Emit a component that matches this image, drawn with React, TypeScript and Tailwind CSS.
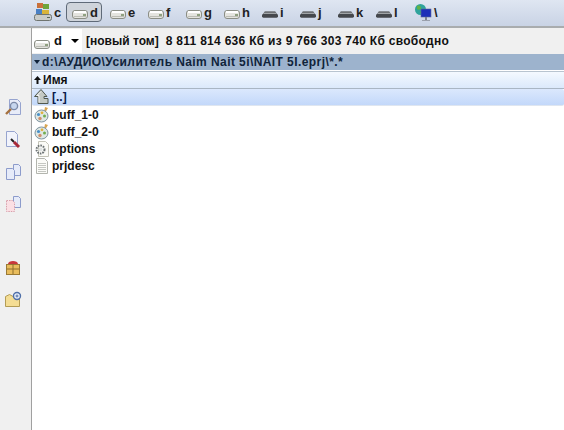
const font = "font-['Liberation_Sans',Arial,sans-serif]";

function DriveIcon({ dark = false }: { dark?: boolean }) {
  if (dark) {
    return (
      <svg width="16" height="10" viewBox="0 0 17 10" className="shrink-0">
        <path d="M3 2h11l2 3v1H1V5z" fill="#6e7175" />
        <rect x="0" y="5" width="17" height="4" rx="1.5" fill="#45484d" />
        <rect x="2" y="4" width="13" height="1" fill="#a5a8ac" />
      </svg>
    );
  }
  return (
    <svg width="16" height="10" viewBox="0 0 16 10" className="shrink-0">
      <rect x="0.5" y="1.5" width="15" height="8" rx="2.5" fill="#e4e4df" stroke="#8b8e85" />
      <rect x="2" y="2" width="12" height="2" fill="#ffffff" />
      <rect x="2" y="7" width="12" height="1" fill="#bcbdb5" />
      <rect x="11" y="5" width="3" height="2" fill="#8fa080" />
    </svg>
  );
}

function WindowsDrive() {
  return (
    <svg width="18" height="18" viewBox="0 0 18 18" className="shrink-0">
      <rect x="3" y="0" width="6" height="5" fill="#c9703a" />
      <rect x="9" y="1" width="6" height="5" fill="#6da53c" />
      <rect x="2" y="6" width="6" height="5" fill="#4a80c4" />
      <rect x="8" y="7" width="7" height="5" fill="#d9b43a" />
      <rect x="0.5" y="11.5" width="17" height="6" rx="2" fill="#c9cbc8" stroke="#6f7470" />
      <rect x="13" y="14" width="3" height="1" fill="#57655a" />
    </svg>
  );
}

function NetworkIcon() {
  return (
    <svg width="18" height="19" viewBox="0 0 18 19" className="shrink-0">
      <circle cx="6.5" cy="6.5" r="5.5" fill="#2fa39c" />
      <path d="M3 3c2-1 4 0 4 2S4 7 3 6zM6 9l3-1 1 2-2 2z" fill="#62b347" />
      <rect x="7" y="6" width="10" height="8" fill="#1c2fb8" stroke="#5a6a9a" strokeWidth="0.6" />
      <rect x="11" y="14" width="2" height="3" fill="#7c8190" />
      <rect x="8" y="17" width="8" height="1" fill="#9aa0ac" />
    </svg>
  );
}

function UpIcon() {
  return (
    <svg width="16" height="16" viewBox="0 0 16 16" className="shrink-0">
      <path d="M7 0.5L0.5 7.5H4v7h10v-5H10V7.5h3z" fill="#c4c9c4" stroke="#50584f" />
      <path d="M7 2.5L3 6.5h2v7" fill="none" stroke="#f4f4f4" />
    </svg>
  );
}

function ProjectIcon() {
  return (
    <svg width="16" height="16" viewBox="0 0 16 16" className="shrink-0">
      <path d="M11 0l3 1-3 5-1-1z" fill="#d9a552" />
      <ellipse cx="7.5" cy="9" rx="6.5" ry="6" fill="#dfe8e4" stroke="#7f94a0" />
      <circle cx="4.5" cy="7.5" r="1.6" fill="#4a90c8" />
      <circle cx="8" cy="5.8" r="1.4" fill="#e0b13c" />
      <circle cx="10.5" cy="9" r="1.5" fill="#72ad4e" />
      <circle cx="6" cy="11.5" r="1.7" fill="#cf8f6a" />
    </svg>
  );
}

function OptionsIcon() {
  return (
    <svg width="16" height="16" viewBox="0 0 16 16" className="shrink-0">
      <path d="M4.5 0.5h7l3 3v12h-10z" fill="#fbfbf7" stroke="#c4c4b8" />
      <circle cx="6.5" cy="8.5" r="4" fill="none" stroke="#6c7274" strokeWidth="2" strokeDasharray="1.6 1" />
      <circle cx="6.5" cy="8.5" r="2" fill="#e0e3e3" />
    </svg>
  );
}

function TextFileIcon() {
  return (
    <svg width="16" height="16" viewBox="0 0 16 16" className="shrink-0">
      <path d="M2.5 0.5h8l3 3v12h-11z" fill="#fbfbf8" stroke="#b3b5ae" />
      <path d="M4 5.5h8M4 7.5h8M4 9.5h8M4 11.5h8M4 13.5h8" stroke="#c5c7c2" />
    </svg>
  );
}

function SearchDocIcon() {
  return (
    <svg width="18" height="20" viewBox="0 0 18 20">
      <path d="M5.5 1.5h8l3 3v12h-11z" fill="#e8ecf8" stroke="#97a4cf" />
      <circle cx="10" cy="8" r="3.6" fill="#c7d6ee" stroke="#7c8aa8" strokeWidth="1.4" />
      <path d="M7 11l-5 5" stroke="#a5713f" strokeWidth="2.4" />
    </svg>
  );
}

function EraseDocIcon() {
  return (
    <svg width="18" height="20" viewBox="0 0 18 20">
      <path d="M2.5 1.5h8l3 3v12h-11z" fill="#f1f3fb" stroke="#97a4cf" />
      <path d="M7 9l3 3" stroke="#202020" strokeWidth="2" />
      <path d="M10 12l5 5" stroke="#a82a3a" strokeWidth="3" />
    </svg>
  );
}

function CopyIcon({ pink = false }: { pink?: boolean }) {
  return (
    <svg width="18" height="18" viewBox="0 0 18 18">
      <path d="M9.5 1.5h5l2 2v9h-7z" fill="#e6ebf9" stroke="#8c9bcb" />
      <path
        d="M2.5 5.5h6l2 2v9h-8z"
        fill={pink ? "#fbdfe4" : "#e6ebf9"}
        stroke={pink ? "#d9a0ac" : "#8c9bcb"}
        strokeDasharray={pink ? "1.5 1" : undefined}
      />
    </svg>
  );
}

function GiftIcon() {
  return (
    <svg width="18" height="18" viewBox="0 0 18 18">
      <rect x="2.5" y="6.5" width="13" height="10" fill="#e9bd5d" stroke="#9a7a35" />
      <path d="M9 6v10M3 11h12" stroke="#8f6f2c" />
      <path d="M4 6c0-4 10-4 10 0z" fill="#c8373a" />
    </svg>
  );
}

function FolderPlusIcon() {
  return (
    <svg width="18" height="18" viewBox="0 0 18 18">
      <path d="M1.5 5.5l4-2 7 4h3v8h-14z" fill="#f4dd94" stroke="#b39c55" />
      <circle cx="13" cy="5" r="3.5" fill="#e8effa" stroke="#4f6fa8" strokeWidth="1.4" />
      <path d="M13 3.5v3M11.5 5h3" stroke="#4f6fa8" />
    </svg>
  );
}

const drives = [
  { letter: "c", kind: "win" },
  { letter: "d", kind: "light", active: true },
  { letter: "e", kind: "light" },
  { letter: "f", kind: "light" },
  { letter: "g", kind: "light" },
  { letter: "h", kind: "light" },
  { letter: "i", kind: "dark" },
  { letter: "j", kind: "dark" },
  { letter: "k", kind: "dark" },
  { letter: "l", kind: "dark" },
  { letter: "\\", kind: "net" },
];

function DriveButton({ letter, kind, active }: { letter: string; kind: string; active?: boolean }) {
  return (
    <div
      className={`w-[36px] h-[20px] mr-[2px] shrink-0 flex items-center gap-[2px] pl-[5px] rounded-[4px] border ${
        active ? "border-[#5f6a78] bg-[#cfd4db]" : "border-transparent"
      }`}
    >
      {kind === "win" && <WindowsDrive />}
      {kind === "light" && <div className="mt-[4px] flex"><DriveIcon /></div>}
      {kind === "dark" && <div className="mt-[3px] flex"><DriveIcon dark /></div>}
      {kind === "net" && <NetworkIcon />}
      <span className="text-[13px] font-bold text-[#222] leading-none">{letter}</span>
    </div>
  );
}

const files = [
  { name: "buff_1-0", icon: <ProjectIcon /> },
  { name: "buff_2-0", icon: <ProjectIcon /> },
  { name: "options", icon: <OptionsIcon /> },
  { name: "prjdesc", icon: <TextFileIcon /> },
];

export default function App() {
  return (
    <div className={`${font} w-[564px] h-[430px] overflow-hidden bg-white flex flex-col text-[12px] font-bold text-[#111]`}>
      {/* Drive toolbar */}
      <div className="h-[28px] shrink-0 flex items-center pl-[28px] pb-[2px] bg-gradient-to-b from-[#dfe6f2] to-[#c9d3e5] border-b-2 border-[#a9acae]">
        {drives.map((d) => (
          <DriveButton key={d.letter} letter={d.letter} kind={d.kind} active={d.active} />
        ))}
      </div>

      <div className="flex-1 flex min-h-0">
        {/* Left tool strip */}
        <div className="w-[32px] shrink-0 bg-[#f0f0f0] border-r border-[#a0a0a0] flex flex-col items-center pr-[6px] pt-[70px]">
          <SearchDocIcon />
          <div className="mt-[12px]"><EraseDocIcon /></div>
          <div className="mt-[13px]"><CopyIcon /></div>
          <div className="mt-[14px]"><CopyIcon pink /></div>
          <div className="mt-[45px]"><GiftIcon /></div>
          <div className="mt-[15px]"><FolderPlusIcon /></div>
        </div>

        {/* File panel */}
        <div className="flex-1 min-w-0 flex flex-col">
          <div className="h-[26px] shrink-0 bg-[#f0f0f0] flex items-center">
            <div className="w-[50px] h-[24px] bg-white flex items-center pl-[2px] gap-[4px]">
              <div className="mt-[5px] flex"><DriveIcon /></div>
              <span className="text-[13px]">d</span>
              <span className="ml-[5px] w-0 h-0 border-x-[4px] border-x-transparent border-t-[4px] border-t-black" />
            </div>
            <span className="ml-[4px] whitespace-nowrap">[новый том]</span>
            <span className="ml-[7px] whitespace-nowrap tracking-[0.29px]">8 811 814 636 Кб из 9 766 303 740 Кб свободно</span>
          </div>

          <div className="h-[16px] shrink-0 bg-[#9db3cd] flex items-center pl-[2px] gap-[2px] text-[#10233a]">
            <span className="w-0 h-0 border-x-[3px] border-x-transparent border-t-[4px] border-t-[#10233a]" />
            <span className="whitespace-nowrap tracking-[0.42px]">d:\АУДИО\Усилитель Naim Nait 5i\NAIT 5I.eprj\*.*</span>
          </div>

          <div className="h-[18px] shrink-0 mt-[1px] bg-gradient-to-b from-[#f4f9ff] to-[#dbe9fb] border-t border-[#b8c4d0] border-b border-b-[#a9b6c4] flex items-center pl-[2px] gap-[2px]">
            <svg width="7" height="8" viewBox="0 0 7 8">
              <path d="M3.5 0L7 4H4.5v4h-2V4H0z" fill="#111" />
            </svg>
            <span>Имя</span>
          </div>

          <div className="h-[17px] shrink-0 bg-gradient-to-b from-[#dbe8fd] to-[#c3d8fa] rounded-[2px] border-b border-[#dfe6f0] flex items-center gap-[2px] pl-[2px]">
            <UpIcon />
            <span className="text-[#0a1a4a]">[..]</span>
          </div>

          {files.map((f) => (
            <div key={f.name} className="h-[17px] shrink-0 flex items-center gap-[2px] pl-[2px]">
              {f.icon}
              <span>{f.name}</span>
            </div>
          ))}
        </div>
      </div>
    </div>
  );
}
